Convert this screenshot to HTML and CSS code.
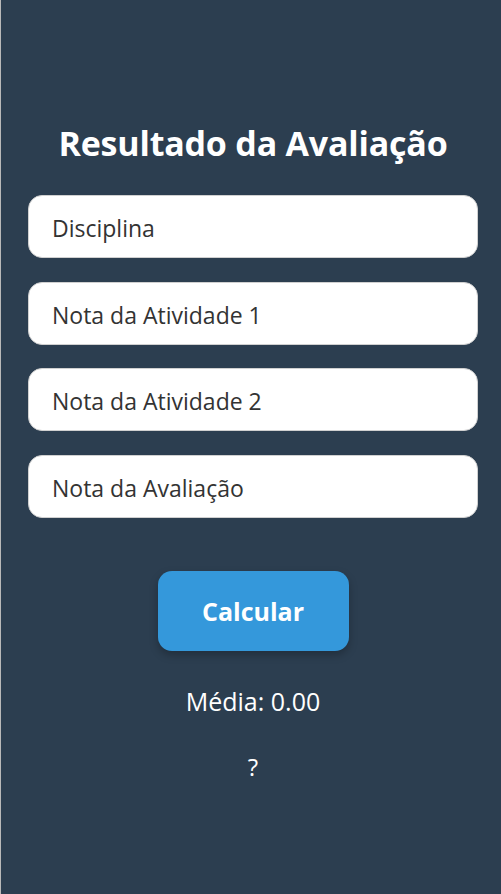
FILE: index.html
```html
<!DOCTYPE html>
<html lang="pt-BR">
<head>
<meta charset="utf-8">
<title>Resultado da Avaliação</title>
<link rel="stylesheet" href="styles.css">
</head>
<body>
<main class="app">
  <h1 class="title">Resultado da Avaliação</h1>
  <form class="form">
    <input class="field" type="text" placeholder="Disciplina">
    <input class="field" type="text" placeholder="Nota da Atividade 1">
    <input class="field" type="text" placeholder="Nota da Atividade 2">
    <input class="field" type="text" placeholder="Nota da Avaliação">
    <button class="btn" type="button">Calcular</button>
  </form>
  <p class="media">Média: 0.00</p>
  <p class="status">?</p>
</main>
</body>
</html>
```
FILE: styles.css
```css
html, body {
  margin: 0;
  height: 100%;
}
body {
  background: #2c3e50;
  font-family: "Open Sans", "Noto Sans", sans-serif;
  color: #fff;
  border-left: 1px solid #b9b9b9;
  box-sizing: border-box;
}
.app {
  padding: 118px 23px 0 27px;
  display: flex;
  flex-direction: column;
  align-items: center;
}
.title {
  margin: 0;
  font-size: 34px;
  font-weight: 700;
  line-height: 50px;
  letter-spacing: -0.2px;
}
.form {
  width: 100%;
  margin-top: 27px;
  display: flex;
  flex-direction: column;
  align-items: center;
  gap: 23.3px;
}
.field {
  width: 100%;
  box-sizing: border-box;
  height: 63.3px;
  border: 1px solid #d0d0d0;
  border-radius: 14px;
  background: #fff;
  padding: 3px 23px 0;
  font-family: inherit;
  font-size: 23px;
  color: #333;
  outline: none;
}
.field::placeholder {
  color: #333;
  opacity: 1;
}
.btn {
  margin-top: 30px;
  width: 191px;
  height: 80px;
  border: none;
  border-radius: 14px;
  background: #3498db;
  color: #fff;
  font-family: inherit;
  font-size: 25px;
  font-weight: 700;
  box-shadow: 0 4px 8px rgba(0, 0, 0, 0.25);
  cursor: pointer;
}
.media {
  margin: 30px 0 0;
  font-size: 25px;
  line-height: 40px;
}
.status {
  margin: 26px 0 0;
  font-size: 24px;
  line-height: 40px;
}
```
